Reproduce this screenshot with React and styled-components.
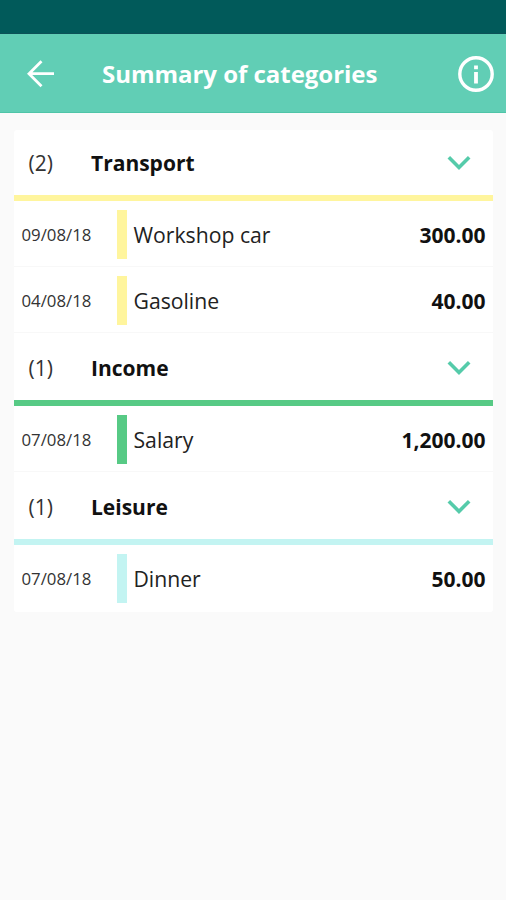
import React, { useState } from 'react';
import styled, { createGlobalStyle } from 'styled-components';

const CATEGORIES = [
  {
    name: 'Transport',
    color: '#fff59d',
    entries: [
      { date: '09/08/18', label: 'Workshop car', amount: 300 },
      { date: '04/08/18', label: 'Gasoline', amount: 40 },
    ],
  },
  {
    name: 'Income',
    color: '#57ca85',
    entries: [{ date: '07/08/18', label: 'Salary', amount: 1200 }],
  },
  {
    name: 'Leisure',
    color: '#c3f4f2',
    entries: [{ date: '07/08/18', label: 'Dinner', amount: 50 }],
  },
];

const formatAmount = (amount) =>
  amount.toLocaleString('en-US', { minimumFractionDigits: 2 });

const GlobalStyle = createGlobalStyle`
  * {
    box-sizing: border-box;
  }

  body {
    margin: 0;
    background: #fafafa;
    font-family: 'Open Sans', 'Noto Sans', sans-serif;
  }
`;

const Screen = styled.div`
  min-height: 100vh;
  background: #fafafa;
  color: #111;
`;

const StatusBar = styled.div`
  height: 34px;
  background: #015a5a;
  border-bottom: 1px solid #0c5258;
`;

const Toolbar = styled.header`
  display: flex;
  align-items: center;
  height: 79px;
  padding: 1px 11px 0 25px;
  background: #61ceb5;
  border-bottom: 1px solid #4fc5a8;
  color: #fff;
`;

const IconButton = styled.button`
  display: flex;
  padding: 0;
  border: 0;
  background: none;
  color: inherit;
  cursor: pointer;
`;

const Title = styled.h1`
  flex: 1;
  margin: 0 0 0 47px;
  padding-top: 1px;
  font-size: 24px;
  font-weight: 700;
  line-height: 34px;
  letter-spacing: -0.03px;
  white-space: nowrap;
`;

const Card = styled.main`
  margin: 17px 13.5px 0 14px;
  background: #fff;
  border-radius: 3px;
  overflow: hidden;
`;

const CategoryHeader = styled.div`
  display: flex;
  align-items: center;
  height: ${({ $first }) => ($first ? 71 : 73)}px;
  padding: ${({ $first }) => ($first ? 0 : 2)}px 21px 0 14.5px;
  border-bottom: 6px solid ${({ $color }) => $color};
`;

const Count = styled.span`
  width: 62.5px;
  font-size: 21px;
  color: #333;
`;

const CategoryName = styled.h2`
  flex: 1;
  margin: 0;
  font-size: 21px;
  font-weight: 700;
  line-height: 30px;
`;

const Entry = styled.div`
  display: flex;
  align-items: center;
  height: 66px;
  padding: 1px 7px 0 7.5px;
  border-bottom: 1px solid #f8f8f8;

  section:last-child > &:last-child {
    height: 67px;
    border-bottom: 2px solid #fff;
  }
`;

const EntryDate = styled.span`
  width: 95px;
  font-size: 16.8px;
  color: #333;
`;

const Marker = styled.span`
  width: 10px;
  height: 49px;
  background: ${({ $color }) => $color};
`;

const Label = styled.span`
  flex: 1;
  margin-left: 7px;
  font-size: 21.2px;
  color: #222;
`;

const Amount = styled.span`
  padding-top: 1px;
  font-size: 21px;
  font-weight: 700;
  line-height: 30px;
`;

function BackIcon() {
  return (
    <svg width="30" height="30" viewBox="0 0 30 30" fill="none" stroke="currentColor" strokeWidth="2.8">
      <path d="M29 14.7H3.5M16.5 2.2L4 14.7l12.5 12.5" />
    </svg>
  );
}

function InfoIcon() {
  return (
    <svg width="38" height="38" viewBox="0 0 38 38" fill="none" stroke="currentColor">
      <circle cx="19" cy="19" r="16.2" strokeWidth="3.4" />
      <path d="M19 10.5v3.8M19 17v11.5" strokeWidth="3.8" />
    </svg>
  );
}

function ChevronIcon() {
  return (
    <svg width="26" height="18" viewBox="0 0 26 18" fill="none" stroke="#55cbaa" strokeWidth="3.6">
      <path d="M2.8 3.2L13 13.4 23.2 3.2" />
    </svg>
  );
}

function Category({ category, first }) {
  const [open, setOpen] = useState(true);

  return (
    <section>
      <CategoryHeader $color={category.color} $first={first}>
        <Count>({category.entries.length})</Count>
        <CategoryName>{category.name}</CategoryName>
        <IconButton onClick={() => setOpen(!open)} aria-label="Toggle category">
          <ChevronIcon />
        </IconButton>
      </CategoryHeader>
      {open &&
        category.entries.map((entry) => (
          <Entry key={entry.label}>
            <EntryDate>{entry.date}</EntryDate>
            <Marker $color={category.color} />
            <Label>{entry.label}</Label>
            <Amount>{formatAmount(entry.amount)}</Amount>
          </Entry>
        ))}
    </section>
  );
}

export default function App() {
  return (
    <Screen>
      <GlobalStyle />
      <StatusBar />
      <Toolbar>
        <IconButton aria-label="Back">
          <BackIcon />
        </IconButton>
        <Title>Summary of categories</Title>
        <IconButton aria-label="Information">
          <InfoIcon />
        </IconButton>
      </Toolbar>
      <Card>
        {CATEGORIES.map((category, index) => (
          <Category key={category.name} category={category} first={index === 0} />
        ))}
      </Card>
    </Screen>
  );
}
